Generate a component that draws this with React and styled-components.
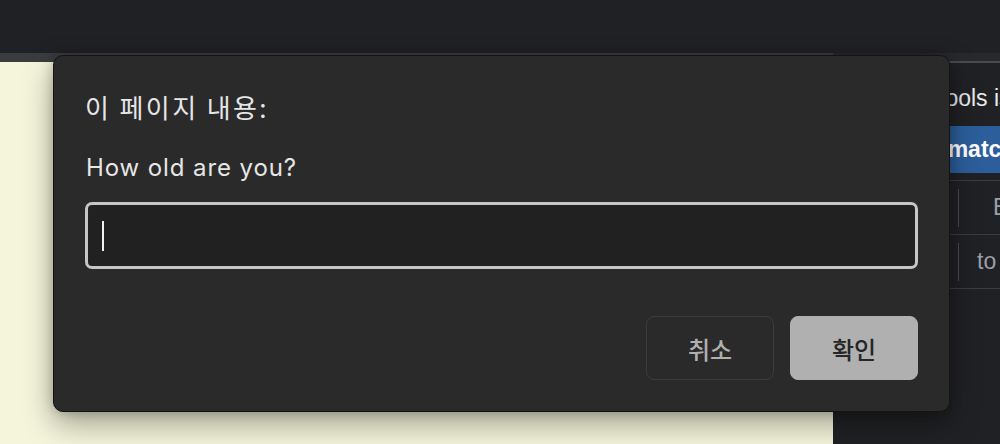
import React from "react";
import styled, { createGlobalStyle } from "styled-components";

const Global = createGlobalStyle`
  html, body { margin: 0; padding: 0; background: #202124; }
  body { font-family: Inter, "Noto Sans CJK KR", sans-serif; }
  #root { width: 1000px; height: 444px; }
`;

const Screen = styled.div`
  position: relative;
  width: 1000px;
  height: 444px;
  display: flex;
  flex-direction: column;
  overflow: hidden;
  background: #202124;
`;

const TopBar = styled.div`
  height: 53px;
  flex: none;
  background: #202124;
`;

const Main = styled.div`
  flex: 1;
  display: flex;
  min-height: 0;
`;

const PageColumn = styled.div`
  width: 833px;
  flex: none;
  display: flex;
  flex-direction: column;
`;

const Strip = styled.div`
  height: 9px;
  flex: none;
  background: #3b3c40;
`;

const Cream = styled.div`
  flex: 1;
  background: #f5f5dc;
`;

const DevPanel = styled.div`
  flex: 1;
  min-width: 0;
  display: flex;
  flex-direction: column;
  background: #202124;
  font-family: "Liberation Sans", Arial, sans-serif;
  white-space: nowrap;
  overflow: hidden;
`;

const PanelTop = styled.div`
  height: 8px;
  flex: none;
  background: #28292c;
  border-bottom: 2px solid #4a4b4e;
`;

const Notice = styled.div`
  height: 63px;
  flex: none;
  box-sizing: border-box;
  padding: 22px 0 0 60px;
  font-size: 23px;
  line-height: 26px;
  color: #e8eaed;
  overflow: hidden;
`;

const BlueBar = styled.div`
  height: 47px;
  flex: none;
  display: flex;
  align-items: center;
  padding-left: 29px;
  background: #2c5e9b;
  color: #ffffff;
  font-size: 23px;
  font-weight: bold;
  overflow: hidden;
`;

const Rows = styled.div`
  margin-top: 7px;
  border-top: 1px solid #3c3d40;
`;

const Row = styled.div`
  height: 53px;
  display: flex;
  align-items: center;
  border-bottom: 1px solid #3c3d40;
  font-size: 23px;
  color: #9aa0a6;
  overflow: hidden;
`;

const Sep = styled.div`
  width: 1px;
  height: 38px;
  margin-left: 125px;
  background: #4a4b4e;
  flex: none;
`;

const RowText = styled.span`
  padding-left: ${(p) => p.$indent}px;
`;

const Dialog = styled.div`
  position: absolute;
  left: 53px;
  top: 55px;
  width: 897px;
  height: 357px;
  box-sizing: border-box;
  border: 1px solid #141414;
  border-radius: 10px;
  background: #2a2a2a;
  box-shadow: 0 12px 30px rgba(0, 0, 0, 0.35), 0 0 12px rgba(0, 0, 0, 0.2);
  display: flex;
  flex-direction: column;
  padding: 0 31px;
`;

const Title = styled.div`
  margin-top: 35px;
  font-size: 26px;
  line-height: 32px;
  letter-spacing: 2.4px;
  color: #e6e6e6;
  font-family: "Noto Sans CJK KR", sans-serif;
`;

const Message = styled.div`
  margin-top: 30px;
  font-size: 24px;
  line-height: 30px;
  letter-spacing: 0.9px;
  color: #e6e6e6;
  padding-left: 1px;
`;

const Field = styled.div`
  margin-top: 19px;
  height: 67px;
  flex: none;
  box-sizing: border-box;
  border: 3px solid #c5c6ca;
  border-radius: 7px;
  background: #212121;
  display: flex;
  align-items: center;
  padding-left: 14px;
`;

const Caret = styled.div`
  width: 2px;
  height: 30px;
  background: #f2f2f2;
`;

const Actions = styled.div`
  margin-top: auto;
  margin-bottom: 31px;
  display: flex;
  justify-content: flex-end;
  gap: 16px;
`;

const Button = styled.button`
  width: 128px;
  height: 64px;
  box-sizing: border-box;
  border-radius: 8px;
  font-family: "Noto Sans CJK KR", sans-serif;
  font-size: 24px;
  font-weight: 500;
  padding: 0;
  cursor: pointer;
  border: 1px solid ${(p) => (p.$primary ? "#b0b0b0" : "#3d3d3d")};
  background: ${(p) => (p.$primary ? "#b0b0b0" : "#2a2a2a")};
  color: ${(p) => (p.$primary ? "#262626" : "#b0b0b0")};
`;

export default function App() {
  return (
    <>
      <Global />
      <Screen>
        <TopBar />
        <Main>
          <PageColumn>
            <Strip />
            <Cream />
          </PageColumn>
          <DevPanel>
            <PanelTop />
            <Notice>DevTools is now available in Korean!</Notice>
            <BlueBar>Always match Chrome's language</BlueBar>
            <Rows>
              <Row>
                <Sep />
                <RowText $indent={34}>Escape</RowText>
              </Row>
              <Row>
                <Sep />
                <RowText $indent={18}>to</RowText>
              </Row>
            </Rows>
          </DevPanel>
        </Main>
        <Dialog role="dialog">
          <Title>이 페이지 내용:</Title>
          <Message>How old are you?</Message>
          <Field>
            <Caret />
          </Field>
          <Actions>
            <Button>취소</Button>
            <Button $primary>확인</Button>
          </Actions>
        </Dialog>
      </Screen>
    </>
  );
}
